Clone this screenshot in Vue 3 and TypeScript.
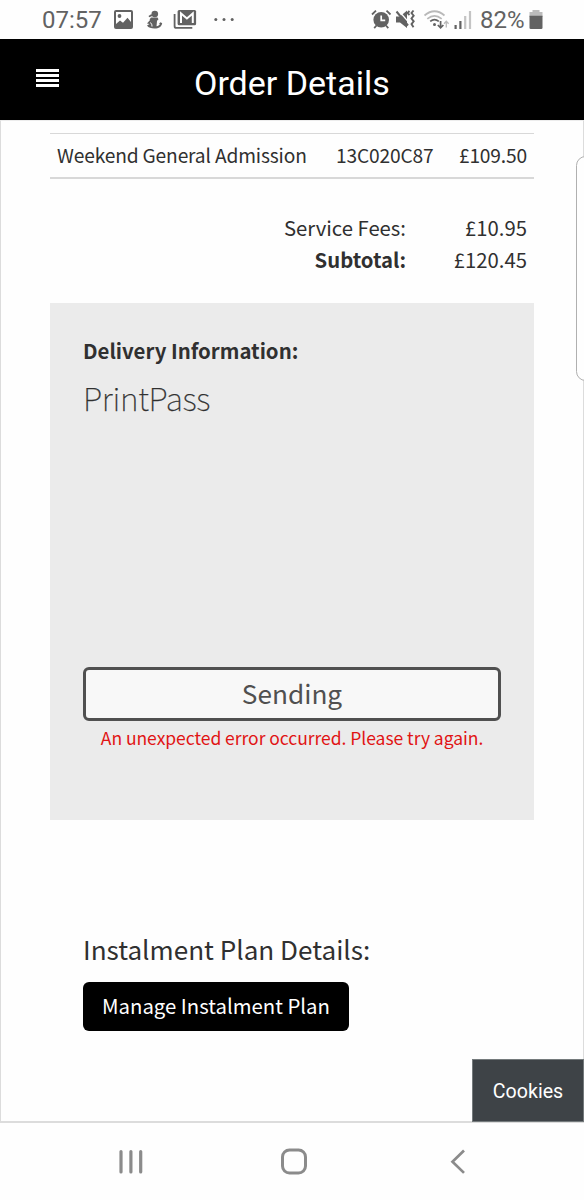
<script setup lang="ts">
interface Line {
  label: string
  amount: string
  bold?: boolean
}

const totals: Line[] = [
  { label: 'Service Fees:', amount: '£10.95' },
  { label: 'Subtotal:', amount: '£120.45', bold: true },
]
</script>

<template>
  <div class="screen">
    <div class="status">
      <span class="time">07:57</span>
      <svg class="left-icons" width="124" height="39" viewBox="114 0 124 39">
        <path fill="#626262" fill-rule="evenodd" d="M116 10h15q2 0 2 2v15q0 2-2 2h-15q-2 0-2-2v-15q0-2 2-2zM116 12v12l4-3.500 3 2.200 4.500-5 3.500 4.300v-10z" />
        <circle cx="119.500" cy="16" r="1.900" fill="#626262" />
        <g fill="#626262">
          <circle cx="154.800" cy="14" r="3.300" />
          <path d="M151.500 14l-3 2 .8 1.200 3-1.200zM151 17.500h6.500l1 1.800-3.500 3.700-5.500-3.500z" />
          <path d="M150.500 19.500l-3.500 4 2.500.4-2.500 1.700c1.500 2.200 4 3 7.500 3 4.500 0 7-2 7.700-5.300l-1.600-1-1.600 1.300 1 .4c-.7 1.300-1.800 2-3.500 2.300l.5-5-3-2z" />
          <path d="M150.500 22.500q2 2.500 1.500 4" fill="none" stroke="#fefefe" stroke-width="1" />
        </g>
        <path fill="none" stroke="#626262" stroke-width="1.800" d="M174.600 14v12.200q0 1.700 1.700 1.700h16" />
        <rect x="177.600" y="10" width="18.500" height="15.300" rx="1.500" fill="#626262" />
        <path d="M181 23v-9.500l5.900 5 5.900-5v9.500" fill="none" stroke="#fefefe" stroke-width="2" />
        <g fill="#626262">
          <circle cx="215.800" cy="19.400" r="1.500" />
          <circle cx="224" cy="19.400" r="1.500" />
          <circle cx="232.200" cy="19.400" r="1.500" />
        </g>
      </svg>
      <svg class="right-icons" width="106" height="39" viewBox="370 0 106 39">
        <g fill="none" stroke="#626262">
          <circle cx="381.200" cy="19.800" r="7.800" fill="#626262" stroke="none" />
          <path stroke-width="1.800" d="M372 14.500l4-3.800M390.500 14.500l-4-3.800M376.500 25.500l-2.300 2.600M386 25.500l2.300 2.600" />
          <path stroke="#fefefe" stroke-width="1.700" d="M381.200 15.500v4.800h4" />
          <path fill="#626262" stroke="none" d="M396 16.500h4l7-6v17.500l-7-5.500h-4z" />
          <path stroke="#fefefe" stroke-width="1.200" d="M398.500 10.500l10 11.500" />
          <path stroke-width="2" d="M396.500 11.500l11.500 14" />
          <path stroke-width="1.900" d="M409.500 11l-2 2 2 2M413.500 10.500l-2 2.500 2.200 2.700-2.200 2.800 2.200 2.800-2.200 2.800 2 3.200" />
        </g>
        <g fill="none" stroke-width="1.700">
          <path stroke="#b9b9b9" d="M424.500 15.500q10-8.500 20 0M427.300 18.800q7.200-6 14.400 0" />
          <path stroke="#626262" d="M430.200 21.300q4.300-3.500 8.600 0" />
          <circle cx="434.500" cy="24.500" r="1.500" fill="#626262" stroke="none" />
          <path stroke="#626262" stroke-width="1.700" d="M440.600 21v6.500M437.800 25l2.800 2.800 2.800-2.800" />
          <path stroke="#b9b9b9" stroke-width="1.300" d="M446.300 27.500v-6M444 23.800l2.300-2.500 2.300 2.500" />
        </g>
        <path fill="#626262" d="M454.500 25h2.200v4h-2.200zM459.300 21h2.200v8h-2.200z" />
        <path fill="#c4c4c4" d="M464.100 16h2.200v13h-2.200zM468.900 11h2.200v18h-2.200z" />
      </svg>
      <span class="percent">82%</span>
      <svg class="battery" width="14" height="39" viewBox="529 0 14 39">
        <path fill="#bcbcbc" d="M532.500 10h7v2h3v5h-13v-5h3z" />
        <path fill="#626262" d="M529.500 15.700h13v12q0 1.300-1.300 1.300h-10.400q-1.300 0-1.300-1.300z" />
      </svg>
    </div>

    <header class="bar">
      <div class="menu"><i></i><i></i><i></i><i></i></div>
      <h1>Order Details</h1>
    </header>

    <main class="page">
      <div class="item">
        <span class="name">Weekend General Admission</span>
        <span class="code">13C020C87</span>
        <span class="price">£109.50</span>
      </div>
      <div class="totals">
        <template v-for="t in totals" :key="t.label">
          <span :class="['label', { bold: t.bold }]">{{ t.label }}</span>
          <span class="amount">{{ t.amount }}</span>
        </template>
      </div>

      <section class="delivery">
        <h2><span>Delivery Information:</span></h2>
        <p class="method"><span>PrintPass</span></p>
        <button class="sending"><span>Sending</span></button>
        <p class="error"><span>An unexpected error occurred. Please try again.</span></p>
      </section>

      <section class="plan">
        <h3><span>Instalment Plan Details:</span></h3>
        <button class="manage"><span>Manage Instalment Plan</span></button>
      </section>

      <div class="edge"></div>
      <button class="cookies">Cookies</button>
    </main>

    <nav class="nav">
      <svg width="584" height="77" viewBox="0 1123 584 77" fill="none" stroke="#8b8b8b">
        <path stroke-width="3.200" stroke-linecap="round" d="M121 1151.500v20.500M130.900 1151.500v20.500M140.700 1151.500v20.500" />
        <rect x="282.500" y="1150" width="23" height="23" rx="7" stroke-width="3" />
        <path stroke-width="2.700" d="M464 1150.500l-11.500 11.200 11.500 11.200" />
      </svg>
    </nav>
  </div>
</template>

<style>
html,
body {
  background: #fefefe;
}
</style>

<style scoped>
.screen {
  width: 584px;
  height: 1200px;
  overflow: hidden;
  background: #fefefe;
  color: #303030;
  font-family: "Noto Sans CJK SC", "Noto Sans CJK JP", "Open Sans", sans-serif;
}
h1, h2, h3, p {
  margin: 0;
  font-weight: 400;
}
button {
  box-sizing: border-box;
  font: inherit;
  padding: 0;
  margin: 0;
  border: 0;
  white-space: nowrap;
}
span {
  white-space: nowrap;
}
.status {
  display: flex;
  height: 39px;
  padding-left: 42px;
  font-family: Roboto, sans-serif;
  color: #626262;
  line-height: 41px;
  font-size: 24px;
}
.time {
  width: 72px;
}
.right-icons {
  margin-left: 132px;
}
.percent {
  margin-left: 4px;
  width: 49px;
}
.bar {
  display: flex;
  height: 81px;
  background: #000;
}
.menu {
  width: 23px;
  margin: 30px 0 0 36px;
  display: flex;
  flex-direction: column;
  gap: 2px;
}
.menu i {
  height: 3px;
  background: #fff;
}
h1 {
  margin-left: 135px;
  color: #fff;
  font-family: Roboto, sans-serif;
  font-size: 34px;
  line-height: 88px;
  white-space: nowrap;
}
.page {
  position: relative;
  box-sizing: border-box;
  height: 1003px;
  border: 1px solid #dcdcdc;
  border-width: 1px 1px 2px 1px;
  border-top-color: #ececec;
  padding: 12px 49px 0;
}
.item {
  box-sizing: border-box;
  height: 46px;
  border: solid #d8d8d8;
  border-width: 1.500px 0 2px;
  display: grid;
  grid-template-columns: 279px 1fr auto;
  padding: 0 7px;
  font-size: 19.200px;
  letter-spacing: -0.160px;
  line-height: 42px;
}
.totals {
  margin-top: 33px;
  padding-right: 7px;
  display: grid;
  grid-template-columns: 1fr 121px;
  grid-auto-rows: 32px;
  text-align: right;
  font-size: 20.300px;
  line-height: 30px;
}
.bold {
  font-weight: 700;
}
.delivery {
  box-sizing: border-box;
  height: 517px;
  margin-top: 27px;
  padding: 31px 33px 0;
  background: #ebebeb;
}
h2 {
  font-size: 20.400px;
  font-weight: 700;
  line-height: 32px;
}
.method {
  margin-top: 1px;
  font-size: 32px;
  font-weight: 100;
  letter-spacing: -0.300px;
  -webkit-text-stroke: 0.250px #303030;
  line-height: 60px;
}
.sending {
  display: block;
  width: 100%;
  height: 54px;
  margin-top: 240px;
  padding-bottom: 2px;
  border: 3px solid #505050;
  border-radius: 6px;
  background: #f8f8f8;
  color: #505050;
  font-size: 26.200px;
  line-height: 46px;
}
.error {
  text-align: center;
  color: #e11414;
  font-size: 17.500px;
  letter-spacing: -0.040px;
  line-height: 34px;
}
.plan {
  padding: 108px 33px 0;
}
h3 {
  font-size: 26.100px;
  line-height: 42px;
}
.manage {
  display: block;
  width: 266px;
  height: 49px;
  margin-top: 12px;
  padding-bottom: 3px;
  border-radius: 6px;
  background: #000;
  color: #fff;
  font-size: 20.350px;
  line-height: 46px;
}
.edge {
  position: absolute;
  top: 35px;
  right: -12px;
  width: 19px;
  height: 225px;
  box-sizing: border-box;
  border: 1px solid #b0b0b0;
  border-radius: 10px;
  background: #fefefe;
}
.cookies {
  position: absolute;
  right: -1px;
  bottom: -1px;
  width: 112px;
  height: 63px;
  padding-top: 2px;
  border: 1.500px solid #747a7c;
  background: #3e4347;
  color: #fff;
  font-family: Roboto, sans-serif;
  font-size: 19.600px;
}
.nav {
  height: 77px;
}
.nav svg {
  display: block;
}
</style>
